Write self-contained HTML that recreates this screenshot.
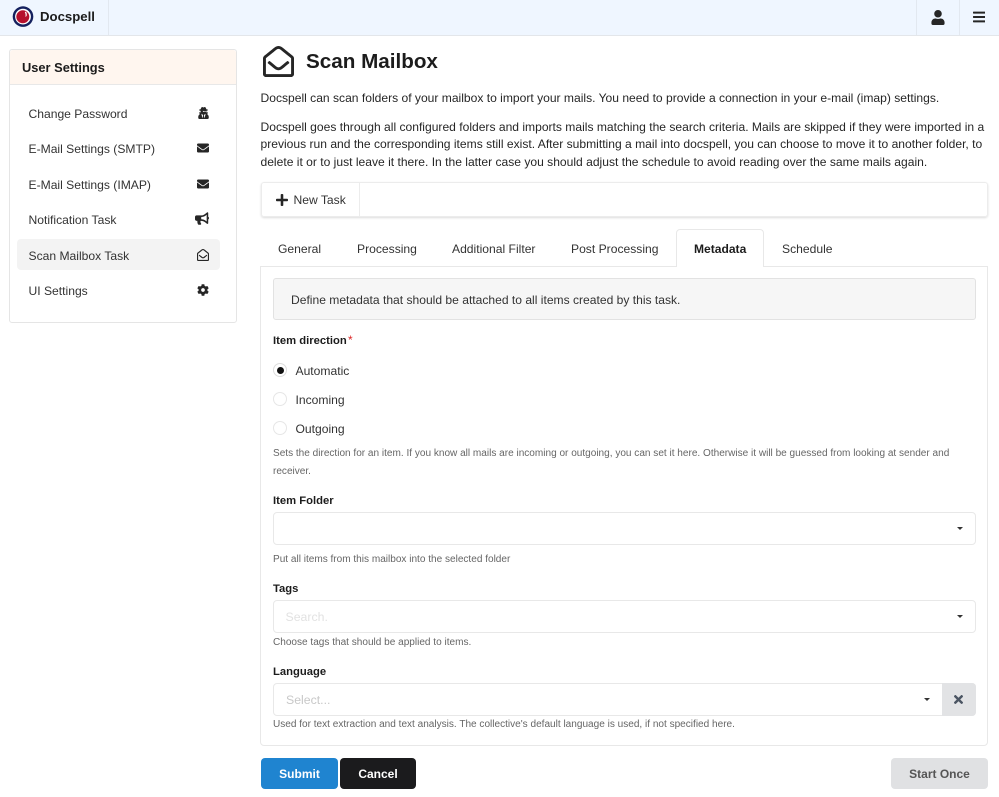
<!DOCTYPE html>
<html><head><meta charset="utf-8"><title>Docspell</title>
<style>
html,body{margin:0;padding:0;background:#fff}
body{width:999px;height:797px;position:relative;overflow:hidden;font-family:"Liberation Sans",sans-serif;color:#262626;font-size:12.08px}
.a{position:absolute;box-sizing:border-box}
.t{position:absolute;white-space:nowrap;line-height:18px;height:18px}
.m{font-size:12.12px;color:#333}
.b{font-weight:700;color:#1c1c1c}
.l{font-size:11.25px}
.h{font-size:10.06px;color:#666;line-height:14px;height:14px}
svg{position:absolute;fill:#262626}
.in{position:absolute;box-sizing:border-box;left:273px;width:703px;height:33px;border:1px solid #e8e8e8;border-radius:4px;background:#fff}
.car{position:absolute;width:0;height:0;border-left:3.5px solid transparent;border-right:3.5px solid transparent;border-top:3.5px solid #333}
.r{position:absolute;left:273px;width:14px;height:14px;border:1px solid #e6e6e6;border-radius:50%;box-sizing:border-box;background:#fff}
.btn{position:absolute;box-sizing:border-box;top:758px;height:31px;border-radius:4px;font-weight:700;font-size:12px;line-height:32px;text-align:center}
</style></head><body>

<div class="a" style="left:0;top:0;width:999px;height:36px;background:#eff6ff;border-bottom:1px solid #e3e6ea"></div>
<div class="a" style="left:108px;top:0;width:1px;height:35px;background:#e2e8f0"></div>
<div class="a" style="left:916px;top:0;width:1px;height:35px;background:#e2e8f0"></div>
<div class="a" style="left:959px;top:0;width:1px;height:35px;background:#e2e8f0"></div>
<svg style="left:12px;top:6px" width="22" height="22" viewBox="0 0 22 22"><circle cx="11" cy="10.6" r="10.3" fill="#14205e"/><circle cx="11" cy="10.6" r="7.9" fill="#fff"/><circle cx="10.8" cy="10.8" r="6.5" fill="#b5102c"/><path d="M13.6 5.6c1.2.8 1.4 2.6 1 4.4l-1.2 1c.3-2 .3-3.6-.6-4.8z" fill="#fff"/></svg>
<div class="t b" style="left:40px;top:8px;font-size:13.2px">Docspell</div>
<svg style="left:931px;top:10px" width="14" height="15" viewBox="0 0 448 512"><path d="M224 256c70.7 0 128-57.3 128-128S294.7 0 224 0 96 57.3 96 128s57.3 128 128 128zm89.6 32h-16.7c-22.2 10.2-46.9 16-72.9 16s-50.6-5.8-72.9-16h-16.7C60.2 288 0 348.2 0 422.4V464c0 26.5 21.5 48 48 48h352c26.5 0 48-21.5 48-48v-41.6c0-74.2-60.2-134.4-134.4-134.4z"/></svg>
<svg style="left:973px;top:10px" width="12.25" height="14" viewBox="0 0 448 512"><path d="M16 132h416c8.837 0 16-7.163 16-16V76c0-8.837-7.163-16-16-16H16C7.163 60 0 67.163 0 76v40c0 8.837 7.163 16 16 16zm0 160h416c8.837 0 16-7.163 16-16v-40c0-8.837-7.163-16-16-16H16c-8.837 0-16 7.163-16 16v40c0 8.837 7.163 16 16 16zm0 160h416c8.837 0 16-7.163 16-16v-40c0-8.837-7.163-16-16-16H16c-8.837 0-16 7.163-16 16v40c0 8.837 7.163 16 16 16z"/></svg>

<div class="a" style="left:9px;top:49px;width:228px;height:274px;border:1px solid #e5e5e5;border-radius:3px"></div>
<div class="a" style="left:10px;top:50px;width:226px;height:35px;background:#fff6ef;border-bottom:1px solid #e8e8e8;border-radius:3px 3px 0 0"></div>
<div class="t b" style="left:22px;top:58.5px;font-size:12.85px">User Settings</div>
<div class="a" style="left:17px;top:239px;width:203px;height:31px;background:#f3f3f3;border-radius:4px"></div>
<div class="t m" style="left:28.5px;top:104.5px">Change Password</div>
<div class="t m" style="left:28.5px;top:139.5px">E-Mail Settings (SMTP)</div>
<div class="t m" style="left:28.5px;top:175.5px">E-Mail Settings (IMAP)</div>
<div class="t m" style="left:28.5px;top:210.5px">Notification Task</div>
<div class="t m" style="left:28.5px;top:246.5px">Scan Mailbox Task</div>
<div class="t m" style="left:28.5px;top:281.5px">UI Settings</div>

<svg style="left:198px;top:107px" width="11" height="12" viewBox="0 0 448 512"><path d="M383.9 308.3l23.9-62.6c4.1-10.7-3.8-22.2-15.3-22.2h-58.5c11-18.9 17.8-40.6 17.8-64v-.3c39.2-7.8 64-19.1 64-31.7 0-13.3-27.3-25.1-70.1-33-9.2-32.8-27-65.8-40.6-82.8-9.5-11.9-25.9-15.6-39.5-8.8l-27.6 13.8c-9 4.5-19.6 4.5-28.6 0L182.1 3.4c-13.6-6.8-30-3.1-39.5 8.8-13.5 17-31.4 50-40.6 82.8-42.7 7.9-70 19.7-70 33 0 12.6 24.8 23.9 64 31.7v.3c0 23.4 6.8 45.1 17.8 64H56.3c-11.5 0-19.4 11.5-15.3 22.2l23.9 62.6C25.6 331.5 0 374 0 422.4V464c0 26.5 21.5 48 48 48h352c26.5 0 48-21.5 48-48v-41.6c0-48.4-25.6-90.9-64.1-114.1zM176 480l-41.6-192 49.6 32 24 40-32 120zm96 0l-32-120 24-40 49.6-32L272 480zm41.7-298.5c-1.9 5.8-1.9 14.9-8.3 20.4-6.8 5.9-32.3 14.6-43.1-17.3-1.9-5.6-10.3-5.6-12.3 0-11.4 33.8-38.1 22.2-43.1 17.3-6.4-5.5-6.4-14.6-8.3-20.4-1.5-4.5-6.8-7.1-6.8-7.2v-10.8c28.3 3.6 61 5.8 96 5.8s67.7-2.1 96-5.8v10.8c-.1.1-5.4 2.6-7 7.2z"/></svg>
<svg style="left:197px;top:142px" width="12" height="12" viewBox="0 0 512 512"><path d="M502.3 190.8c3.9-3.1 9.7-.2 9.7 4.7V400c0 26.5-21.5 48-48 48H48c-26.5 0-48-21.5-48-48V195.6c0-5 5.7-7.8 9.7-4.7 22.4 17.4 52.1 39.5 154.1 113.6 21.1 15.4 56.7 47.8 92.2 47.6 35.7.3 72-32.8 92.3-47.6 102-74.1 131.6-96.3 154-113.7zM256 320c23.2.4 56.6-29.2 73.4-41.4 132.7-96.3 142.8-104.7 173.4-128.7 5.8-4.5 9.2-11.5 9.2-18.9v-19c0-26.5-21.5-48-48-48H48C21.5 64 0 85.5 0 112v19c0 7.4 3.4 14.3 9.2 18.9 30.6 23.9 40.7 32.4 173.4 128.7 16.8 12.2 50.2 41.8 73.4 41.4z"/></svg>
<svg style="left:197px;top:178px" width="12" height="12" viewBox="0 0 512 512"><path d="M502.3 190.8c3.9-3.1 9.7-.2 9.7 4.7V400c0 26.5-21.5 48-48 48H48c-26.5 0-48-21.5-48-48V195.6c0-5 5.7-7.8 9.7-4.7 22.4 17.4 52.1 39.5 154.1 113.6 21.1 15.4 56.7 47.8 92.2 47.6 35.7.3 72-32.8 92.3-47.6 102-74.1 131.6-96.3 154-113.7zM256 320c23.2.4 56.6-29.2 73.4-41.4 132.7-96.3 142.8-104.7 173.4-128.7 5.8-4.5 9.2-11.5 9.2-18.9v-19c0-26.5-21.5-48-48-48H48C21.5 64 0 85.5 0 112v19c0 7.4 3.4 14.3 9.2 18.9 30.6 23.9 40.7 32.4 173.4 128.7 16.8 12.2 50.2 41.8 73.4 41.4z"/></svg>
<svg style="left:195px;top:212px" width="14" height="13" viewBox="0 0 576 512"><path d="M576 240c0-23.63-12.95-44.04-32-55.12V32.01C544 23.26 537.02 0 512 0c-7.12 0-14.19 2.38-19.98 7.02l-85.03 68.03C364.28 109.19 310.66 128 256 128H64c-35.35 0-64 28.65-64 64v96c0 35.35 28.65 64 64 64h33.7c-1.39 10.48-2.18 21.14-2.18 32 0 39.77 9.26 77.35 25.56 110.94 5.19 10.69 16.52 17.06 28.4 17.06h74.28c26.05 0 41.69-29.84 25.9-50.56-16.4-21.52-26.15-48.36-26.15-77.44 0-11.11 1.62-21.79 4.41-32H256c54.66 0 108.28 18.81 150.98 52.95l85.03 68.03a32.023 32.023 0 0 0 19.98 7.02c24.92 0 32-22.78 32-32V295.13C563.05 284.04 576 263.63 576 240zm-96 141.42l-33.05-26.44C392.95 311.78 325.12 288 256 288v-96c69.12 0 136.95-23.78 190.95-66.98L480 98.58v282.84z"/></svg>
<svg style="left:197px;top:249px" width="12" height="12" viewBox="0 0 512 512"><path d="M494.586 164.516c-4.697-3.883-111.723-89.95-135.251-108.657C337.231 38.191 299.437 0 256 0c-43.205 0-80.636 37.717-103.335 55.859-24.463 19.45-131.07 105.195-135.15 108.549A48.004 48.004 0 0 0 0 201.485V464c0 26.51 21.49 48 48 48h416c26.51 0 48-21.49 48-48V201.509a48 48 0 0 0-17.414-36.993zM464 458a6 6 0 0 1-6 6H54a6 6 0 0 1-6-6V204.347c0-1.813.816-3.526 2.226-4.665 15.87-12.814 108.793-87.554 132.364-106.293C200.755 78.88 232.398 48 256 48c23.693 0 55.857 31.369 73.41 45.389 23.573 18.741 116.503 93.493 132.366 106.316a5.99 5.99 0 0 1 2.224 4.663V458zm-31.991-187.704c4.249 5.159 3.465 12.795-1.745 16.981-28.975 23.283-59.274 47.597-70.929 56.863C336.636 362.283 299.205 400 256 400c-43.452 0-81.287-38.237-103.335-55.86-11.279-8.967-41.744-33.413-70.927-56.865-5.21-4.187-5.993-11.822-1.745-16.981l15.258-18.528c4.178-5.073 11.657-5.843 16.779-1.726 28.618 23.001 58.566 47.035 70.56 56.571C200.143 320.631 232.307 352 256 352c23.602 0 55.246-30.88 73.41-45.389 11.994-9.535 41.944-33.57 70.563-56.568 5.119-4.117 12.597-3.347 16.778 1.726l15.258 18.527z"/></svg>
<svg style="left:197px;top:284px" width="12" height="12" viewBox="0 0 512 512"><path fill="#262626" d="M487.4 315.7l-42.6-24.6c4.3-23.2 4.3-47 0-70.2l42.6-24.6c4.9-2.8 7.1-8.6 5.5-14-11.1-35.6-30-67.8-54.7-94.6-3.8-4.1-10-5.1-14.8-2.3L380.8 110c-17.9-15.4-38.5-27.3-60.8-35.1V25.8c0-5.6-3.9-10.5-9.4-11.7-36.7-8.2-74.3-7.8-109.2 0-5.5 1.2-9.4 6.1-9.4 11.7V75c-22.2 7.9-42.8 19.8-60.8 35.1L88.7 85.5c-4.9-2.8-11-1.9-14.8 2.3-24.7 26.7-43.6 58.9-54.7 94.6-1.7 5.4.6 11.2 5.5 14L67.3 221c-4.3 23.2-4.3 47 0 70.2l-42.6 24.6c-4.9 2.8-7.1 8.6-5.5 14 11.1 35.6 30 67.8 54.7 94.6 3.8 4.1 10 5.1 14.8 2.3l42.6-24.6c17.9 15.4 38.5 27.3 60.8 35.1v49.2c0 5.6 3.9 10.5 9.4 11.7 36.7 8.2 74.3 7.8 109.2 0 5.5-1.2 9.4-6.1 9.4-11.7v-49.2c22.2-7.9 42.8-19.8 60.8-35.1l42.6 24.6c4.9 2.8 11 1.9 14.8-2.3 24.7-26.7 43.6-58.9 54.7-94.6 1.5-5.5-.7-11.3-5.6-14.1zM256 336c-44.1 0-80-35.9-80-80s35.9-80 80-80 80 35.9 80 80-35.9 80-80 80z"/></svg>
<svg style="left:263px;top:45.5px" width="31" height="31" viewBox="0 0 512 512"><path d="M494.586 164.516c-4.697-3.883-111.723-89.95-135.251-108.657C337.231 38.191 299.437 0 256 0c-43.205 0-80.636 37.717-103.335 55.859-24.463 19.45-131.07 105.195-135.15 108.549A48.004 48.004 0 0 0 0 201.485V464c0 26.51 21.49 48 48 48h416c26.51 0 48-21.49 48-48V201.509a48 48 0 0 0-17.414-36.993zM464 458a6 6 0 0 1-6 6H54a6 6 0 0 1-6-6V204.347c0-1.813.816-3.526 2.226-4.665 15.87-12.814 108.793-87.554 132.364-106.293C200.755 78.88 232.398 48 256 48c23.693 0 55.857 31.369 73.41 45.389 23.573 18.741 116.503 93.493 132.366 106.316a5.99 5.99 0 0 1 2.224 4.663V458zm-31.991-187.704c4.249 5.159 3.465 12.795-1.745 16.981-28.975 23.283-59.274 47.597-70.929 56.863C336.636 362.283 299.205 400 256 400c-43.452 0-81.287-38.237-103.335-55.86-11.279-8.967-41.744-33.413-70.927-56.865-5.21-4.187-5.993-11.822-1.745-16.981l15.258-18.528c4.178-5.073 11.657-5.843 16.779-1.726 28.618 23.001 58.566 47.035 70.56 56.571C200.143 320.631 232.307 352 256 352c23.602 0 55.246-30.88 73.41-45.389 11.994-9.535 41.944-33.57 70.563-56.568 5.119-4.117 12.597-3.347 16.778 1.726l15.258 18.527z"/></svg>
<div class="t b" style="left:306px;top:48px;font-size:20.65px;line-height:28px;height:28px">Scan Mailbox</div>
<div class="t" style="left:260.5px;top:89px">Docspell can scan folders of your mailbox to import your mails. You need to provide a connection in your e-mail (imap) settings.</div>
<div class="t" style="left:260.5px;top:118px">Docspell goes through all configured folders and imports mails matching the search criteria. Mails are skipped if they were imported in a</div>
<div class="t" style="left:260.5px;top:135px">previous run and the corresponding items still exist. After submitting a mail into docspell, you can choose to move it to another folder, to</div>
<div class="t" style="left:260.5px;top:153px">delete it or to just leave it there. In the latter case you should adjust the schedule to avoid reading over the same mails again.</div>

<div class="a" style="left:261px;top:182px;width:727px;height:35px;border:1px solid #ececec;border-radius:3px;box-shadow:0 1px 2px rgba(0,0,0,.14)"></div>
<div class="a" style="left:359px;top:183px;width:1px;height:33px;background:#ececec"></div>
<svg style="left:276px;top:194px" width="12" height="12" viewBox="0 32 448 448" preserveAspectRatio="none"><path d="M416 208H272V64c0-17.67-14.33-32-32-32h-32c-17.67 0-32 14.33-32 32v144H32c-17.67 0-32 14.33-32 32v32c0 17.67 14.33 32 32 32h144v144c0 17.67 14.33 32 32 32h32c17.67 0 32-14.33 32-32V304h144c17.67 0 32-14.33 32-32v-32c0-17.67-14.33-32-32-32z"/></svg>
<div class="t m" style="left:293.5px;top:191px">New Task</div>

<div class="a" style="left:260px;top:266px;width:728px;height:480px;border:1px solid #e8e8e8;border-radius:0 0 4px 4px"></div>
<div class="a" style="left:676px;top:229px;width:88px;height:38px;background:#fff;border:1px solid #e8e8e8;border-bottom:0;border-radius:4px 4px 0 0"></div>
<div class="t m" style="left:278px;top:240px">General</div>
<div class="t m" style="left:357px;top:240px">Processing</div>
<div class="t m" style="left:452px;top:240px">Additional Filter</div>
<div class="t m" style="left:571px;top:240px">Post Processing</div>
<div class="t b" style="left:694px;top:240px;font-size:12.07px">Metadata</div>
<div class="t m" style="left:782px;top:240px">Schedule</div>

<div class="a" style="left:273px;top:278px;width:703px;height:42px;background:#f6f6f6;border:1px solid #e2e2e2;border-radius:3px"></div>
<div class="t" style="left:291px;top:291px;color:#333">Define metadata that should be attached to all items created by this task.</div>

<div class="t b l" style="left:273px;top:331.5px">Item direction</div>
<div class="t" style="left:348px;top:333px;font-size:12px;color:#dc2626;line-height:14px;height:14px">*</div>
<div class="r" style="top:363px;border-color:#ddd"></div>
<div class="a" style="left:276.5px;top:366.5px;width:7px;height:7px;border-radius:50%;background:#111"></div>
<div class="t m" style="left:295.5px;top:361.5px">Automatic</div>
<div class="r" style="top:392px"></div>
<div class="t m" style="left:295.5px;top:391px">Incoming</div>
<div class="r" style="top:421px"></div>
<div class="t m" style="left:295.5px;top:420px">Outgoing</div>
<div class="t h" style="left:273px;top:447px">Sets the direction for an item. If you know all mails are incoming or outgoing, you can set it here. Otherwise it will be guessed from looking at sender and</div>
<div class="t h" style="left:273px;top:465px">receiver.</div>

<div class="t b l" style="left:273px;top:492px">Item Folder</div>
<div class="in" style="top:512px"></div>
<div class="car" style="left:956.5px;top:527px"></div>
<div class="t h" style="left:273px;top:553px">Put all items from this mailbox into the selected folder</div>

<div class="t b l" style="left:273px;top:580px">Tags</div>
<div class="in" style="top:600px"></div>
<div class="t" style="left:285.5px;top:608px;font-size:12.3px;color:#e2e2e2">Search.</div>
<div class="car" style="left:956.5px;top:615px"></div>
<div class="t h" style="left:273px;top:636px">Choose tags that should be applied to items.</div>

<div class="t b l" style="left:273px;top:663px">Language</div>
<div class="in" style="top:683px"></div>
<div class="a" style="left:942px;top:683px;width:34px;height:33px;background:#e2e3e5;border-radius:0 4px 4px 0"></div>
<div class="t" style="left:286px;top:691px;font-size:12.3px;color:#c8c8c8">Select...</div>
<div class="car" style="left:923.5px;top:698px"></div>
<svg style="left:954px;top:695px" width="9" height="9" viewBox="0 80 352 352" preserveAspectRatio="none"><path fill="#4b5563" d="M242.72 256l100.07-100.07c12.28-12.28 12.28-32.19 0-44.48l-22.24-22.24c-12.28-12.28-32.19-12.28-44.48 0L176 189.28 75.93 89.21c-12.28-12.28-32.19-12.28-44.48 0L9.21 111.45c-12.28 12.28-12.28 32.19 0 44.48L109.28 256 9.21 356.07c-12.28 12.28-12.28 32.19 0 44.48l22.24 22.24c12.28 12.28 32.2 12.28 44.48 0L176 322.72l100.07 100.07c12.28 12.28 32.2 12.28 44.48 0l22.24-22.24c12.28-12.28 12.28-32.19 0-44.48L242.72 256z"/></svg>
<div class="t h" style="left:273px;top:718px">Used for text extraction and text analysis. The collective's default language is used, if not specified here.</div>

<div class="btn" style="left:261px;width:77px;background:#1f84d0;color:#fff">Submit</div>
<div class="btn" style="left:340px;width:76px;background:#1b1b1d;color:#fff">Cancel</div>
<div class="btn" style="left:891px;width:97px;background:#e0e1e3;color:#555">Start Once</div>
</body></html>
